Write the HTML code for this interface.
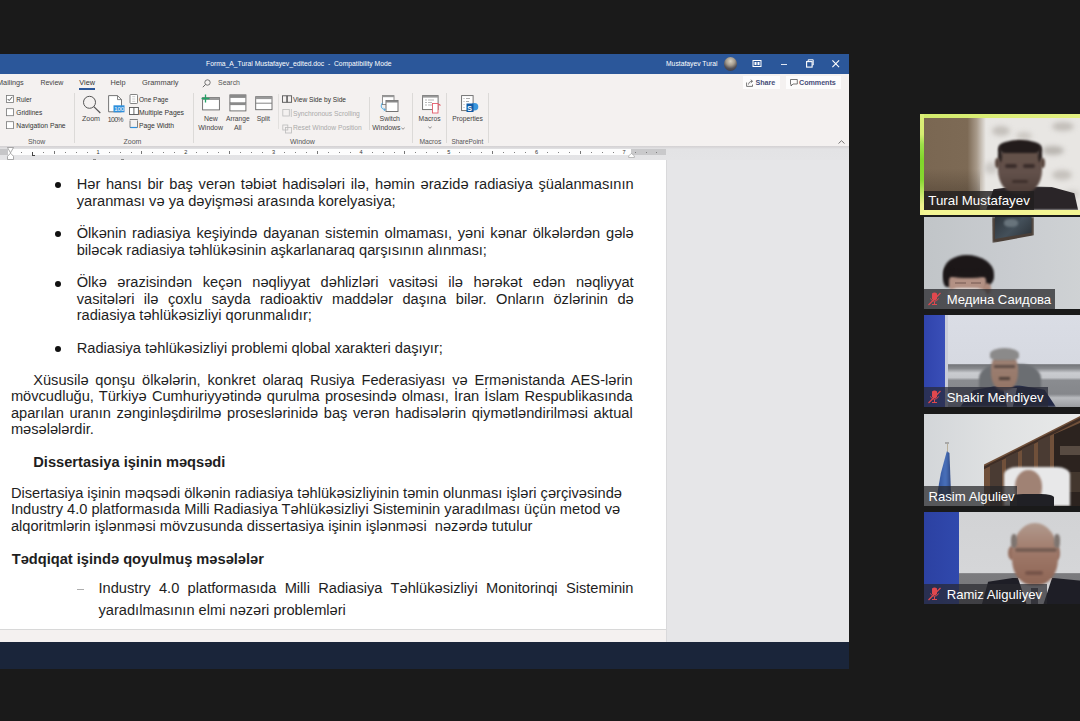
<!DOCTYPE html>
<html><head><meta charset="utf-8">
<style>
*{margin:0;padding:0;box-sizing:border-box}
html,body{width:1080px;height:721px;overflow:hidden;background:#1a1a1a;font-family:"Liberation Sans",sans-serif}
.a{position:absolute}
#win{position:absolute;left:0;top:54px;width:849px;height:615px;background:#e6e6e8;overflow:hidden}
#title{position:absolute;left:0;top:0;width:849px;height:20px;background:#2b579a;color:#fff}
#ribbon{position:absolute;left:0;top:20px;width:849px;height:72px;background:#f4f1f0}
#ruler{position:absolute;left:0;top:93px;width:849px;height:13px;background:#e1e1e3}
#page{position:absolute;left:0;top:106px;width:666px;height:470px;background:#fff;border-bottom:1px solid #d8d8d8}
#status{position:absolute;left:0;top:576px;width:666px;height:12px;background:#f4f1f0}
#navy{position:absolute;left:0;top:588px;width:849px;height:27px;background:#1a253a}
.doc{position:absolute;font-size:14.65px;line-height:16px;color:#1e1e1e;white-space:nowrap}
.j{text-align:justify;text-align-last:justify;white-space:normal}
.b{font-weight:bold}
.bul{position:absolute;width:6px;height:6px;border-radius:50%;background:#111}
.rt{position:absolute;font-size:7px;color:#333;white-space:nowrap;line-height:9px}
.tile{position:absolute;left:924px;width:160px;height:92px;overflow:hidden;background:#ccc}
.lbl{position:absolute;left:0;bottom:0;height:20px;background:rgba(30,30,30,.72)}
.nm{position:absolute;top:3px;font-size:13.1px;color:#fff;white-space:nowrap;line-height:15px}
</style></head><body>
<div id="win">
  <div id="title"></div>
  <div id="ribbon"></div>
  <div id="ruler"></div>
  <div id="page"></div>
  <div id="status"></div>
  <div class="a" style="left:666px;top:106px;width:1px;height:482px;background:#d9d9db"></div>
  <div id="navy"></div>
</div>
<!--RIB-->
<div class="a" style="left:0;top:54px;width:849px;height:20px;z-index:2">
 <div class="rt" style="left:206px;top:5px;color:#fff;font-size:6.78px;letter-spacing:0">Forma_A_Tural Mustafayev_edited.doc&nbsp; -&nbsp; Compatibility Mode</div>
 <div class="rt" style="left:666px;top:5.3px;color:#fff;font-size:6.75px">Mustafayev Tural</div>
 <div class="a" style="left:723.7px;top:3.3px;width:13.4px;height:13.4px;border-radius:50%;background:radial-gradient(circle at 50% 30%,#d8d2c4 0,#a59c8e 35%,#55535a 62%,#2c2e38 100%)"></div>
 <svg class="a" style="left:752px;top:5px" width="10" height="9" viewBox="0 0 10 9"><rect x="1" y="1.5" width="8" height="6" fill="none" stroke="#fff" stroke-width="1"/><rect x="2.5" y="3" width="2" height="3" fill="#fff"/><rect x="5.5" y="3" width="2" height="3" fill="#fff"/></svg>
 <div class="a" style="left:780.5px;top:9.5px;width:6.5px;height:1px;background:#dfe6f2"></div>
 <svg class="a" style="left:806px;top:5px" width="8" height="9" viewBox="0 0 8 9"><rect x="0.6" y="2.6" width="5.5" height="5.5" fill="none" stroke="#fff" stroke-width="1.1"/><path d="M2.2 2.3V0.8h5v5.2H6.3" fill="none" stroke="#fff" stroke-width="1"/></svg>
 <svg class="a" style="left:832px;top:6.3px" width="7.5" height="7.5" viewBox="0 0 7.5 7.5"><path d="M0.4 0.4L7.1 7.1M7.1 0.4L0.4 7.1" stroke="#fff" stroke-width="1.1"/></svg>
</div>
<div class="a" style="left:0;top:74px;width:849px;height:73px;z-index:2">
 <div class="rt" style="left:-3px;top:4.2px;font-size:7.3px;color:#444">Mailings</div>
 <div class="rt" style="left:40.4px;top:4.2px;font-size:7px;color:#444">Review</div>
 <div class="rt" style="left:79.3px;top:4.2px;font-size:7.3px;color:#333">View</div>
 <div class="a" style="left:78.7px;top:14px;width:16.7px;height:2px;background:#2b579a"></div>
 <div class="rt" style="left:110.5px;top:4.2px;font-size:7.3px;color:#444">Help</div>
 <div class="rt" style="left:142px;top:4.2px;font-size:7.4px;color:#444">Grammarly</div>
 <svg class="a" style="left:201.5px;top:4.5px" width="9" height="9" viewBox="0 0 9 9"><circle cx="5.5" cy="3.5" r="2.7" fill="none" stroke="#666" stroke-width="0.9"/><path d="M3.6 5.4L0.8 8.2" stroke="#666" stroke-width="1"/></svg>
 <div class="rt" style="left:218px;top:4.2px;font-size:6.95px;color:#555">Search</div>

 <!-- Show group -->
 <svg class="a" style="left:6px;top:21.4px" width="8" height="34" viewBox="0 0 8 34">
  <rect x="0.5" y="0.5" width="7" height="7" fill="#fff" stroke="#777" stroke-width="0.8"/><path d="M1.7 4L3.2 5.6L6.3 1.8" fill="none" stroke="#444" stroke-width="0.9"/>
  <rect x="0.5" y="13.7" width="7" height="7" fill="#fff" stroke="#777" stroke-width="0.8"/>
  <rect x="0.5" y="26.7" width="7" height="7" fill="#fff" stroke="#777" stroke-width="0.8"/>
 </svg>
 <div class="rt" style="left:16.3px;top:20.6px;font-size:6.4px;color:#333">Ruler</div>
 <div class="rt" style="left:16.3px;top:33.8px;font-size:6.6px;color:#333">Gridlines</div>
 <div class="rt" style="left:16.3px;top:46.8px;font-size:6.73px;color:#333">Navigation Pane</div>
 <div class="rt" style="left:28px;top:63.3px;font-size:6.9px;color:#555">Show</div>
 <div class="a" style="left:74px;top:19px;width:1px;height:50px;background:#dcdad8"></div>

 <!-- Zoom group -->
 <svg class="a" style="left:81.5px;top:20.5px" width="20" height="19" viewBox="0 0 20 19"><circle cx="7.5" cy="7.3" r="6" fill="none" stroke="#555" stroke-width="1"/><path d="M11.8 11.6L18.3 18" stroke="#555" stroke-width="1.2"/></svg>
 <svg class="a" style="left:107.5px;top:20.5px" width="17" height="18" viewBox="0 0 17 18"><path d="M0.6 0.6H9.5L13.5 4.6V16.8H0.6Z" fill="#fff" stroke="#666" stroke-width="0.9"/><path d="M9.5 0.6V4.6H13.5" fill="none" stroke="#666" stroke-width="0.8"/><rect x="5.5" y="10.3" width="11" height="7" fill="#2f8fdc"/><text x="6.2" y="16.3" font-size="6" fill="#fff" font-family="Liberation Sans">100</text></svg>
 <div class="rt" style="left:81.9px;top:41px;font-size:7.1px;color:#444">Zoom</div>
 <div class="rt" style="left:107.8px;top:40.6px;font-size:7px;letter-spacing:-0.72px;color:#444">100%</div>
 <svg class="a" style="left:128.5px;top:20.3px" width="10" height="36" viewBox="0 0 10 36">
  <rect x="1" y="0.5" width="7.5" height="9" rx="0.8" fill="#fff" stroke="#666" stroke-width="0.8"/><path d="M3.2 2.7H6.3M3.2 5H6.3M3.2 7.3H6.3" stroke="#999" stroke-width="0.5"/>
  <rect x="0.4" y="13.5" width="9" height="7" fill="#fff" stroke="#555" stroke-width="0.9"/><path d="M4.9 13.5V20.5" stroke="#555" stroke-width="0.9"/>
  <path d="M1 27V33.5H8.5V27" fill="none" stroke="#666" stroke-width="0.8"/><path d="M1 26.5V25.5H8.5V26.5" fill="none" stroke="#666" stroke-width="0.8"/><path d="M1.5 33.5H8" stroke="#2f8fdc" stroke-width="1.2"/>
 </svg>
 <div class="rt" style="left:139px;top:20.6px;font-size:6.5px;color:#333">One Page</div>
 <div class="rt" style="left:139px;top:33.8px;font-size:6.86px;color:#333">Multiple Pages</div>
 <div class="rt" style="left:139px;top:46.6px;font-size:6.77px;color:#333">Page Width</div>
 <div class="rt" style="left:123.5px;top:63.3px;font-size:7px;color:#555">Zoom</div>
 <div class="a" style="left:192.5px;top:19px;width:1px;height:50px;background:#dcdad8"></div>

 <!-- Window group -->
 <svg class="a" style="left:200.5px;top:20px" width="20" height="17" viewBox="0 0 20 17"><rect x="1.6" y="3.6" width="16.8" height="12.3" fill="#fff" stroke="#666" stroke-width="0.9"/><rect x="1.6" y="3.6" width="16.8" height="2.4" fill="#9a9a9a"/><path d="M4.5 0.5V8.5M0.5 4.5H8.5" stroke="#21a366" stroke-width="1.3"/></svg>
 <svg class="a" style="left:229px;top:20px" width="18" height="18" viewBox="0 0 18 18"><rect x="0.9" y="0.9" width="16" height="16" fill="#fff" stroke="#666" stroke-width="0.9"/><rect x="0.9" y="0.9" width="16" height="3" fill="#8a8a8a"/><path d="M0.9 8.9H16.9" stroke="#666" stroke-width="0.9"/><rect x="0.9" y="8.9" width="16" height="2.2" fill="#8a8a8a"/></svg>
 <svg class="a" style="left:254.5px;top:21.5px" width="18" height="15" viewBox="0 0 18 15"><rect x="0.7" y="0.7" width="16.3" height="13" fill="#fff" stroke="#666" stroke-width="0.9"/><rect x="0.7" y="0.7" width="16.3" height="2.4" fill="#9a9a9a"/><path d="M0.7 7.2H17" stroke="#777" stroke-width="0.9"/></svg>
 <div class="rt" style="left:204px;top:40.2px;font-size:6.9px;color:#444">New</div>
 <div class="rt" style="left:198.3px;top:49.3px;font-size:6.95px;color:#444">Window</div>
 <div class="rt" style="left:226px;top:40.2px;font-size:6.63px;color:#444">Arrange</div>
 <div class="rt" style="left:233.9px;top:49.3px;font-size:7px;color:#444">All</div>
 <div class="rt" style="left:256.7px;top:40.2px;font-size:6.84px;color:#444">Split</div>
 <div class="a" style="left:277.5px;top:20px;width:1px;height:35px;background:#e2e0de"></div>
 <svg class="a" style="left:281.5px;top:21px" width="11" height="41" viewBox="0 0 11 41">
  <rect x="0.5" y="0.8" width="4.3" height="6.5" fill="none" stroke="#555" stroke-width="0.9"/><rect x="5.3" y="0.8" width="4.3" height="6.5" fill="none" stroke="#555" stroke-width="0.9"/>
  <rect x="0.8" y="14.5" width="6.5" height="6.5" fill="none" stroke="#bbb" stroke-width="0.8"/><path d="M9.3 14V22" stroke="#bbb" stroke-width="0.8"/>
  <rect x="0.8" y="30" width="5" height="5" fill="none" stroke="#bbb" stroke-width="0.8"/><rect x="3.5" y="32.5" width="6" height="5.5" fill="none" stroke="#bbb" stroke-width="0.8"/>
 </svg>
 <div class="rt" style="left:293px;top:21.2px;font-size:6.6px;color:#333">View Side by Side</div>
 <div class="rt" style="left:293px;top:35.1px;font-size:6.73px;color:#aaa">Synchronous Scrolling</div>
 <div class="rt" style="left:293px;top:48.6px;font-size:6.7px;color:#aaa">Reset Window Position</div>
 <div class="rt" style="left:290px;top:63.3px;font-size:7px;color:#555">Window</div>
 <div class="a" style="left:368.5px;top:22.5px;width:1px;height:33px;background:#dcdad8"></div>
 <svg class="a" style="left:379.5px;top:20.5px" width="19" height="18" viewBox="0 0 19 18"><rect x="2.5" y="0.6" width="11.5" height="9" fill="#fff" stroke="#777" stroke-width="0.8"/><rect x="2.5" y="0.6" width="11.5" height="1.6" fill="#999"/><rect x="6" y="5.5" width="12" height="11" fill="#fff" stroke="#666" stroke-width="0.9"/><rect x="6" y="5.5" width="12" height="2" fill="#888"/><path d="M2.6 7.8C0.4 10 0.8 14.2 4.8 14.6" fill="none" stroke="#35a0e0" stroke-width="0.9"/><path d="M3.6 13.2L5.3 14.6L3.8 16.1" fill="none" stroke="#35a0e0" stroke-width="0.8"/></svg>
 <div class="rt" style="left:379.5px;top:40.2px;font-size:6.96px;color:#444">Switch</div>
 <div class="rt" style="left:372.3px;top:49.3px;font-size:6.96px;color:#444">Windows</div><svg class="a" style="left:401px;top:52.5px" width="4" height="3" viewBox="0 0 4 3"><path d="M0.3 0.5L2 2.3L3.7 0.5" fill="none" stroke="#666" stroke-width="0.7"/></svg>
 <div class="a" style="left:411.7px;top:19px;width:1px;height:50px;background:#dcdad8"></div>

 <!-- Macros -->
 <svg class="a" style="left:421.5px;top:20.5px" width="19" height="19" viewBox="0 0 19 19"><rect x="0.6" y="0.6" width="15.5" height="14" fill="#fff" stroke="#666" stroke-width="0.9"/><rect x="0.6" y="0.6" width="15.5" height="2" fill="#999"/><path d="M3 5H5M6 5H12M3 7.5H5M6 7.5H10M3 10H5M6 10H10" stroke="#999" stroke-width="0.7"/><rect x="10.5" y="8.5" width="5.5" height="9.5" fill="#fff" stroke="#e45c6a" stroke-width="0.9"/><path d="M16 9.5H18V11" fill="none" stroke="#e45c6a" stroke-width="0.9"/></svg>
 <div class="rt" style="left:418.6px;top:40.2px;font-size:6.7px;color:#444">Macros</div>
 <svg class="a" style="left:428px;top:51.5px" width="4" height="3" viewBox="0 0 4 3"><path d="M0.3 0.5L2 2.3L3.7 0.5" fill="none" stroke="#666" stroke-width="0.7"/></svg>
 <div class="rt" style="left:419.4px;top:63.4px;font-size:6.7px;color:#555">Macros</div>
 <div class="a" style="left:446px;top:19px;width:1px;height:50px;background:#dcdad8"></div>

 <!-- SharePoint -->
 <svg class="a" style="left:461px;top:20.5px" width="18" height="19" viewBox="0 0 18 19"><rect x="0.6" y="0.6" width="11.5" height="15" fill="#fff" stroke="#666" stroke-width="0.9"/><path d="M2.5 3.5H3.5M5 3.5H9M2.5 6.5H3.5M5 6.5H8M2.5 9.5H3.5M2.5 12.5H3.5" stroke="#888" stroke-width="0.7"/><circle cx="13.5" cy="11.8" r="3.8" fill="#3a96dd"/><rect x="5.5" y="8.5" width="7" height="8.5" fill="#0f5aa6"/><text x="6.3" y="15.5" font-size="7" font-weight="bold" fill="#fff" font-family="Liberation Sans">S</text></svg>
 <div class="rt" style="left:452.3px;top:40.2px;font-size:6.73px;color:#444">Properties</div>
 <div class="rt" style="left:451.4px;top:63.4px;font-size:6.43px;color:#555">SharePoint</div>
 <div class="a" style="left:488.2px;top:19px;width:1px;height:50px;background:#dcdad8"></div>

 <!-- Share / Comments -->
 <div class="a" style="left:742.6px;top:2px;width:37px;height:12.5px;background:#fdfcfc"></div>
 <svg class="a" style="left:745.5px;top:4.5px" width="8" height="8" viewBox="0 0 8 8"><path d="M0.6 3.5V7.4H6.5V5.5" fill="none" stroke="#555" stroke-width="0.8"/><path d="M2.5 5.5C2.7 3.5 4 2.3 6 2.3M4.8 0.8L6.6 2.3L4.8 3.8" fill="none" stroke="#555" stroke-width="0.8"/></svg>
 <div class="rt" style="left:755.6px;top:3.9px;font-size:7.2px;color:#474d78;font-weight:bold;letter-spacing:-0.1px">Share</div>
 <div class="a" style="left:786px;top:2px;width:55px;height:12.5px;background:#fdfcfc"></div>
 <svg class="a" style="left:789.5px;top:4.5px" width="8" height="8" viewBox="0 0 8 8"><path d="M0.5 0.5H7.3V5H3L1 7V5H0.5Z" fill="none" stroke="#555" stroke-width="0.8"/></svg>
 <div class="rt" style="left:799px;top:3.9px;font-size:7.2px;color:#474d78;font-weight:bold;letter-spacing:-0.05px">Comments</div>
 <svg class="a" style="left:837.5px;top:66px" width="7" height="4" viewBox="0 0 7 4"><path d="M0.5 3.5L3.5 0.7L6.5 3.5" fill="none" stroke="#666" stroke-width="0.9"/></svg>
</div>
<!--/RIB-->

<!--RUL-->
<div class="a" style="left:0;top:146px;width:849px;height:14px;z-index:2;background:linear-gradient(180deg,#d3d1d3 0,#dcdbdd 2px,#e3e3e5 3px,#e4e4e6 100%)">
<div class="a" style="left:0;top:3px;width:8px;height:6px;background:#c6c6c8"></div>
<div class="a" style="left:8px;top:3px;width:623px;height:6px;background:#fdfdfd"></div>
<div class="a" style="left:631px;top:3px;width:35px;height:6px;background:#c9c9cb"></div>
<div class="a" style="left:20.96px;top:5.5px;width:1px;height:1px;background:#808080"></div>
<div class="a" style="left:42.87px;top:5.5px;width:1px;height:1px;background:#808080"></div>
<div class="a" style="left:53.83px;top:4.5px;width:1px;height:3px;background:#777"></div>
<div class="a" style="left:64.79px;top:5.5px;width:1px;height:1px;background:#808080"></div>
<div class="a" style="left:75.75px;top:5.5px;width:1px;height:1px;background:#808080"></div>
<div class="a" style="left:86.70px;top:5.5px;width:1px;height:1px;background:#808080"></div>
<div class="a" style="left:96.16px;top:3.3px;width:4px;text-align:center;font-size:5.6px;line-height:6px;color:#333">1</div>
<div class="a" style="left:108.62px;top:5.5px;width:1px;height:1px;background:#808080"></div>
<div class="a" style="left:119.57px;top:5.5px;width:1px;height:1px;background:#808080"></div>
<div class="a" style="left:130.53px;top:5.5px;width:1px;height:1px;background:#808080"></div>
<div class="a" style="left:141.49px;top:4.5px;width:1px;height:3px;background:#777"></div>
<div class="a" style="left:152.45px;top:5.5px;width:1px;height:1px;background:#808080"></div>
<div class="a" style="left:163.41px;top:5.5px;width:1px;height:1px;background:#808080"></div>
<div class="a" style="left:174.36px;top:5.5px;width:1px;height:1px;background:#808080"></div>
<div class="a" style="left:183.82px;top:3.3px;width:4px;text-align:center;font-size:5.6px;line-height:6px;color:#333">2</div>
<div class="a" style="left:196.28px;top:5.5px;width:1px;height:1px;background:#808080"></div>
<div class="a" style="left:207.23px;top:5.5px;width:1px;height:1px;background:#808080"></div>
<div class="a" style="left:218.19px;top:5.5px;width:1px;height:1px;background:#808080"></div>
<div class="a" style="left:229.15px;top:4.5px;width:1px;height:3px;background:#777"></div>
<div class="a" style="left:240.11px;top:5.5px;width:1px;height:1px;background:#808080"></div>
<div class="a" style="left:251.06px;top:5.5px;width:1px;height:1px;background:#808080"></div>
<div class="a" style="left:262.02px;top:5.5px;width:1px;height:1px;background:#808080"></div>
<div class="a" style="left:271.48px;top:3.3px;width:4px;text-align:center;font-size:5.6px;line-height:6px;color:#333">3</div>
<div class="a" style="left:283.94px;top:5.5px;width:1px;height:1px;background:#808080"></div>
<div class="a" style="left:294.89px;top:5.5px;width:1px;height:1px;background:#808080"></div>
<div class="a" style="left:305.85px;top:5.5px;width:1px;height:1px;background:#808080"></div>
<div class="a" style="left:316.81px;top:4.5px;width:1px;height:3px;background:#777"></div>
<div class="a" style="left:327.77px;top:5.5px;width:1px;height:1px;background:#808080"></div>
<div class="a" style="left:338.72px;top:5.5px;width:1px;height:1px;background:#808080"></div>
<div class="a" style="left:349.68px;top:5.5px;width:1px;height:1px;background:#808080"></div>
<div class="a" style="left:359.14px;top:3.3px;width:4px;text-align:center;font-size:5.6px;line-height:6px;color:#333">4</div>
<div class="a" style="left:371.60px;top:5.5px;width:1px;height:1px;background:#808080"></div>
<div class="a" style="left:382.56px;top:5.5px;width:1px;height:1px;background:#808080"></div>
<div class="a" style="left:393.51px;top:5.5px;width:1px;height:1px;background:#808080"></div>
<div class="a" style="left:404.47px;top:4.5px;width:1px;height:3px;background:#777"></div>
<div class="a" style="left:415.43px;top:5.5px;width:1px;height:1px;background:#808080"></div>
<div class="a" style="left:426.38px;top:5.5px;width:1px;height:1px;background:#808080"></div>
<div class="a" style="left:437.34px;top:5.5px;width:1px;height:1px;background:#808080"></div>
<div class="a" style="left:446.80px;top:3.3px;width:4px;text-align:center;font-size:5.6px;line-height:6px;color:#333">5</div>
<div class="a" style="left:459.26px;top:5.5px;width:1px;height:1px;background:#808080"></div>
<div class="a" style="left:470.21px;top:5.5px;width:1px;height:1px;background:#808080"></div>
<div class="a" style="left:481.17px;top:5.5px;width:1px;height:1px;background:#808080"></div>
<div class="a" style="left:492.13px;top:4.5px;width:1px;height:3px;background:#777"></div>
<div class="a" style="left:503.09px;top:5.5px;width:1px;height:1px;background:#808080"></div>
<div class="a" style="left:514.04px;top:5.5px;width:1px;height:1px;background:#808080"></div>
<div class="a" style="left:525.00px;top:5.5px;width:1px;height:1px;background:#808080"></div>
<div class="a" style="left:534.46px;top:3.3px;width:4px;text-align:center;font-size:5.6px;line-height:6px;color:#333">6</div>
<div class="a" style="left:546.92px;top:5.5px;width:1px;height:1px;background:#808080"></div>
<div class="a" style="left:557.88px;top:5.5px;width:1px;height:1px;background:#808080"></div>
<div class="a" style="left:568.83px;top:5.5px;width:1px;height:1px;background:#808080"></div>
<div class="a" style="left:579.79px;top:4.5px;width:1px;height:3px;background:#777"></div>
<div class="a" style="left:590.75px;top:5.5px;width:1px;height:1px;background:#808080"></div>
<div class="a" style="left:601.70px;top:5.5px;width:1px;height:1px;background:#808080"></div>
<div class="a" style="left:612.66px;top:5.5px;width:1px;height:1px;background:#808080"></div>
<div class="a" style="left:622.12px;top:3.3px;width:4px;text-align:center;font-size:5.6px;line-height:6px;color:#333">7</div>
<div class="a" style="left:634.58px;top:5.5px;width:1px;height:1px;background:#808080"></div>
<div class="a" style="left:645.53px;top:5.5px;width:1px;height:1px;background:#808080"></div>
<div class="a" style="left:656.49px;top:5.5px;width:1px;height:1px;background:#808080"></div>
<div class="a" style="left:32px;top:6px;width:3.2px;height:4px;border-left:1px solid #444;border-bottom:1px solid #444"></div>
<svg class="a" style="left:7px;top:1px" width="7" height="13" viewBox="0 0 7 13"><path d="M0.5 0.5H6.5L3.5 5.8Z" fill="#fff" stroke="#888" stroke-width="0.7"/><path d="M3.5 6.2L0.5 9.3V12.5H6.5V9.3Z" fill="#fff" stroke="#888" stroke-width="0.7"/></svg>
<svg class="a" style="left:628px;top:7px" width="7" height="5" viewBox="0 0 7 5"><path d="M3.5 0.5L6.3 2.8V4.5H0.7V2.8Z" fill="#fff" stroke="#999" stroke-width="0.6"/></svg>
<div class="a" style="left:93px;top:13px;width:3px;height:1px;background:#888"></div>
<div class="a" style="left:120.5px;top:13px;width:3px;height:1px;background:#888"></div>
</div>
<!--/RUL-->
<!--DOC-->
<div class="doc j" style="left:76.70px;top:176.26px;width:557px">Hər hansı bir baş verən təbiət hadisələri ilə, həmin ərazidə radiasiya şüalanmasının</div>
<div class="doc " style="left:76.70px;top:192.56px">yaranması və ya dəyişməsi arasında korelyasiya;</div>
<div class="doc j" style="left:76.70px;top:225.26px;width:557px">Ölkənin radiasiya keşiyində dayanan sistemin olmaması, yəni kənar ölkələrdən gələ</div>
<div class="doc " style="left:76.70px;top:241.56px">biləcək radiasiya təhlükəsinin aşkarlanaraq qarşısının alınması;</div>
<div class="doc j" style="left:76.70px;top:274.16px;width:557px">Ölkə ərazisindən keçən nəqliyyat dəhlizləri vasitəsi ilə hərəkət edən nəqliyyat</div>
<div class="doc j" style="left:76.70px;top:290.56px;width:557px">vasitələri ilə çoxlu sayda radioaktiv maddələr daşına bilər. Onların özlərinin də</div>
<div class="doc " style="left:76.70px;top:306.96px">radiasiya təhlükəsizliyi qorunmalıdır;</div>
<div class="doc " style="left:76.70px;top:339.56px">Radiasiya təhlükəsizliyi problemi qlobal xarakteri daşıyır;</div>
<div class="doc j" style="left:33.20px;top:371.96px;width:599.5px">Xüsusilə qonşu ölkələrin, konkret olaraq Rusiya Federasiyası və Ermənistanda AES-lərin</div>
<div class="doc j" style="left:10.90px;top:388.26px;width:621.8px">mövcudluğu, Türkiyə Cumhuriyyətində qurulma prosesində olması, İran İslam Respublikasında</div>
<div class="doc j" style="left:10.90px;top:404.66px;width:621.8px">aparılan uranın zənginləşdirilmə proseslərinidə baş verən hadisələrin qiymətləndirilməsi aktual</div>
<div class="doc " style="left:10.90px;top:420.96px">məsələlərdir.</div>
<div class="doc b" style="left:33.30px;top:454.26px">Dissertasiya işinin məqsədi</div>
<div class="doc " style="left:10.90px;top:484.86px">Disertasiya işinin məqsədi ölkənin radiasiya təhlükəsizliyinin təmin olunması işləri çərçivəsində</div>
<div class="doc " style="left:10.90px;top:501.16px">Industry 4.0 platformasıda Milli Radiasiya Təhlükəsizliyi Sisteminin yaradılması üçün metod və</div>
<div class="doc " style="left:10.90px;top:518.36px">alqoritmlərin işlənməsi mövzusunda dissertasiya işinin işlənməsi&nbsp; nəzərdə tutulur</div>
<div class="doc b" style="left:11.70px;top:550.56px">Tədqiqat işində qoyulmuş məsələlər</div>
<div class="doc j" style="left:98.50px;top:580.26px;width:535px">Industry 4.0 platformasıda Milli Radiasiya Təhlükəsizliyi Monitorinqi Sisteminin</div>
<div class="doc " style="left:98.50px;top:602.06px">yaradılmasının elmi nəzəri problemləri</div>
<div class="bul" style="left:55px;top:182.00px"></div>
<div class="bul" style="left:55px;top:231.00px"></div>
<div class="bul" style="left:55px;top:280.6px"></div>
<div class="bul" style="left:55px;top:345.8px"></div>
<div class="a" style="left:76.8px;top:588.8px;width:7.2px;height:1.4px;background:#aeaeae"></div>
<!--/DOC-->
<!--TILES-->
<div class="a" style="left:920px;top:114px;width:164px;height:101px;background:linear-gradient(180deg,#dcee78 0,#d6ec72 20%,#9ddf4a 30%,#80d52a 45%,#86d730 65%,#c8ea6e 80%,#eef28c 90%,#f2f490 100%)"></div>
<div class="a" style="left:924px;top:114px;width:160px;height:4px;background:linear-gradient(90deg,#d2eb6c,#dcee78 50%,#e4f082)"></div>
<div class="a" style="left:924px;top:210px;width:160px;height:5px;background:#f3f493"></div>
<div class="tile" style="top:118px;background:#e8e6e3">
  <div class="a" style="left:0;top:0;width:62px;height:92px;background:linear-gradient(90deg,#7a6752 0,#7d6a55 70%,#a89a8a 85%,rgba(232,230,227,0) 100%)"></div>
  <div class="a" style="left:0;top:0;width:56px;height:92px;background:linear-gradient(180deg,rgba(0,0,0,0) 0,rgba(0,0,0,0) 55%,rgba(30,22,15,.25) 80%,rgba(30,22,15,.45) 100%)"></div>
  <div class="a" style="left:68px;top:8px;width:18px;height:10px;border-radius:50%;background:#c4c0bb;filter:blur(2.5px)"></div>
  <div class="a" style="left:92px;top:14px;width:16px;height:8px;border-radius:50%;background:#cbc7c2;filter:blur(2.5px)"></div>
  <div class="a" style="left:118px;top:28px;width:22px;height:9px;border-radius:50%;background:#b9b5b0;filter:blur(2.5px)"></div>
  <div class="a" style="left:128px;top:4px;width:22px;height:9px;border-radius:50%;background:#c2beb9;filter:blur(2.5px)"></div>
  <div class="a" style="left:60px;top:44px;width:14px;height:12px;border-radius:50%;background:#cdcac6;filter:blur(2.5px)"></div>
  <div class="a" style="left:128px;top:52px;width:20px;height:10px;border-radius:50%;background:#c5c1bc;filter:blur(2.5px)"></div>
  <div class="a" style="left:140px;top:72px;width:16px;height:8px;border-radius:50%;background:#cfccc8;filter:blur(2.5px)"></div>
  <div class="a" style="left:62px;top:68px;width:94px;height:24px;background:#2a2528;clip-path:polygon(8% 14%,36% 0,70% 4%,94% 30%,98% 100%,0 100%);filter:blur(1px)"></div>
  <div class="a" style="left:74px;top:23px;width:44px;height:53px;border-radius:46% 46% 44% 44%;background:linear-gradient(180deg,#655249 0,#62504a 60%,#4e3e38 100%);filter:blur(1px)"></div>
  <div class="a" style="left:75px;top:22px;width:42px;height:13px;border-radius:50% 50% 22% 22%;background:#221b1b;filter:blur(1px)"></div>
  <div class="a" style="left:74px;top:28px;width:4px;height:16px;border-radius:40%;background:#2a2120;filter:blur(1px)"></div>
  <div class="a" style="left:114px;top:28px;width:4px;height:16px;border-radius:40%;background:#2a2120;filter:blur(1px)"></div>
  <div class="a" style="left:81px;top:46px;width:12px;height:4px;background:#3a2d2a;border-radius:2px;filter:blur(1px)"></div>
  <div class="a" style="left:99px;top:46px;width:12px;height:4px;background:#3a2d2a;border-radius:2px;filter:blur(1px)"></div>
  <div class="a" style="left:88px;top:62px;width:16px;height:3px;background:#3f302c;border-radius:2px;filter:blur(1px)"></div><div class="a" style="left:71px;top:40px;width:5px;height:10px;border-radius:50%;background:#5a4840;filter:blur(1px)"></div><div class="a" style="left:116px;top:40px;width:5px;height:10px;border-radius:50%;background:#5a4840;filter:blur(1px)"></div>
  <div class="lbl" style="width:110px;height:19.5px;background:rgba(32,30,30,.8)"><div class="nm" style="left:4.3px;top:2.5px;font-size:13.3px">Tural Mustafayev</div></div>
</div>

<div class="tile" style="top:217px;background:linear-gradient(90deg,#c1c5c8,#c9ccd0 55%,#cfd2d4)">
  <div class="a" style="left:68px;top:0;width:42px;height:26px;background:#4a3f38;clip-path:polygon(0 0,100% 0,100% 70%,1% 100%);filter:blur(1px)"></div>
  <div class="a" style="left:70.5px;top:0;width:37px;height:22px;background:linear-gradient(135deg,#2e353c,#44505a 50%,#2a3036);clip-path:polygon(0 0,100% 0,100% 72%,0 100%)"></div>
  <div class="a" style="left:80px;top:2px;width:14px;height:8px;background:#68747c;border-radius:40%;filter:blur(1.2px)"></div>
  <div class="a" style="left:20px;top:38px;width:50px;height:34px;border-radius:45% 55% 35% 40%;background:#1c1718;filter:blur(1px)"></div>
  <div class="a" style="left:19px;top:50px;width:10px;height:20px;border-radius:40%;background:#1c1718;filter:blur(1px)"></div>
  <div class="a" style="left:25px;top:57px;width:37px;height:20px;border-radius:30% 30% 40% 40%;background:#b39184;filter:blur(1px)"></div>
  <div class="a" style="left:25px;top:53px;width:38px;height:8px;border-radius:40%;background:#1c1718;filter:blur(1px)"></div>
  <div class="a" style="left:59px;top:66px;width:8px;height:11px;border-radius:50%;background:#ae8a7c;filter:blur(1px)"></div>
  <div class="a" style="left:31px;top:65px;width:11px;height:2px;background:#5a4038;opacity:.35"></div>
  <div class="a" style="left:47px;top:65px;width:10px;height:2px;background:#5a4038;opacity:.35"></div>
  <div class="a" style="left:24px;top:71px;width:38px;height:14px;background:#e6e4e2;border-radius:35% 35% 20% 20%;filter:blur(1px)"></div>
  <div class="lbl" style="width:131px;height:20px;background:rgba(38,38,42,.74)">
    <svg class="a" style="left:3px;top:3px" width="15" height="14" viewBox="0 0 15 14"><path d="M5 1.5Q7.5 -0.5 10 1.5V7Q7.5 9.5 5 7Z" fill="#e0484e"/><path d="M3.2 6.5Q7.5 12 11.8 6.5M7.5 9.5V12.5M5 12.5H10" fill="none" stroke="#e0484e" stroke-width="1"/><path d="M1.5 13L13.5 1" stroke="#e0484e" stroke-width="1.3"/></svg>
    <div class="nm" style="left:22.7px;top:2.5px;font-size:13.1px">Медина Саидова</div></div>
</div>

<div class="tile" style="top:315px;background:linear-gradient(180deg,#dadde5 0,#d6d9e1 53%,#74767a 54%,#86888c 58%,#caccd0 63%,#c4c6ca 68%,#8a8c90 71%,#85878b 86%,#b9bbbf 90%,#9a9ca0 100%)">
  <div class="a" style="left:0;top:0;width:20.5px;height:92px;background:linear-gradient(90deg,#3044ac,#3a4fb8)"></div>
  <div class="a" style="left:20.5px;top:0;width:3px;height:92px;background:#c9ccd8"></div>
  <div class="a" style="left:55px;top:49px;width:62px;height:40px;border-radius:35% 35% 8% 8%;background:#6b6e72;filter:blur(1px)"></div>
  <div class="a" style="left:36px;top:70px;width:96px;height:22px;background:#222845;clip-path:polygon(14% 24%,40% 2%,62% 2%,88% 22%,100% 100%,0 100%);filter:blur(1px)"></div>
  <div class="a" style="left:79px;top:73px;width:14px;height:19px;background:#b8b8c0;clip-path:polygon(0 0,100% 0,70% 100%,30% 100%)"></div>
  <div class="a" style="left:67px;top:36px;width:27px;height:40px;border-radius:46% 46% 46% 46%;background:linear-gradient(180deg,#8a7a72,#9c7f71 30%,#957566 100%);filter:blur(1px)"></div>
  <div class="a" style="left:66px;top:33px;width:29px;height:12px;border-radius:50% 50% 25% 25%;background:#8b8a8a;filter:blur(1px)"></div>
  <div class="a" style="left:70px;top:50px;width:21px;height:3px;background:#4d3f3a;opacity:.75;filter:blur(1px)"></div>
  <div class="a" style="left:75px;top:62px;width:11px;height:3px;background:#3b302c;opacity:.75;filter:blur(1px)"></div>
  <div class="lbl" style="width:124px;height:20px;background:rgba(40,42,55,.72)">
    <svg class="a" style="left:3px;top:3px" width="15" height="14" viewBox="0 0 15 14"><path d="M5 1.5Q7.5 -0.5 10 1.5V7Q7.5 9.5 5 7Z" fill="#e0484e"/><path d="M3.2 6.5Q7.5 12 11.8 6.5M7.5 9.5V12.5M5 12.5H10" fill="none" stroke="#e0484e" stroke-width="1"/><path d="M1.5 13L13.5 1" stroke="#e0484e" stroke-width="1.3"/></svg>
    <div class="nm" style="left:22.7px;top:2.5px;font-size:13.1px">Shakir Mehdiyev</div></div>
</div>

<div class="tile" style="top:414px;background:linear-gradient(90deg,#d3d6d9,#dfe1e2 45%,#e9eaea)">
  <div class="a" style="left:22.5px;top:29px;width:1.5px;height:12px;background:#b8ae98"></div><div class="a" style="left:21px;top:28px;width:4px;height:2px;background:#a8a8a8"></div>
  <div class="a" style="left:12px;top:37px;width:16px;height:50px;background:linear-gradient(90deg,#2c4a92,#4a72bc 60%,#2a3f78);clip-path:polygon(68% 0,84% 4%,96% 100%,0 100%,30% 45%);filter:blur(1px)"></div>
  <div class="a" style="left:60px;top:0;width:100px;height:92px;background:#70503a;clip-path:polygon(0 55%,100% 0,100% 100%,0 100%)"></div>
  <div class="a" style="left:60px;top:0;width:100px;height:92px;background:#3e2d25;clip-path:polygon(0 57%,100% 2%,100% 5%,0 60%)"></div>
  <div class="a" style="left:66px;top:0;width:12px;height:92px;background:#4a3b33;clip-path:polygon(0 56%,100% 50%,100% 100%,0 100%)"></div>
  <div class="a" style="left:82px;top:0;width:12px;height:92px;background:#4a3b33;clip-path:polygon(0 47%,100% 41%,100% 100%,0 100%)"></div>
  <div class="a" style="left:98px;top:0;width:12px;height:92px;background:#4a3b33;clip-path:polygon(0 38%,100% 32%,100% 100%,0 100%)"></div>
  <div class="a" style="left:114px;top:0;width:12px;height:92px;background:#4a3b33;clip-path:polygon(0 29%,100% 23%,100% 100%,0 100%)"></div>
  <div class="a" style="left:130px;top:0;width:30px;height:92px;background:#2c231f;clip-path:polygon(0 22%,100% 8%,100% 100%,0 100%)"></div>
  <div class="a" style="left:136px;top:32px;width:20px;height:9px;background:#7d6e5e;opacity:.55"></div>
  <div class="a" style="left:140px;top:58px;width:18px;height:20px;background:#5a4c3e;opacity:.5"></div>
  <div class="a" style="left:80px;top:53px;width:66px;height:39px;border-radius:20% 20% 0 0;background:#e8e8e9;filter:blur(1px)"></div>
  <div class="a" style="left:91px;top:56px;width:27px;height:34px;border-radius:48%;background:#a08274;filter:blur(1px)"></div>
  <div class="a" style="left:86px;top:80px;width:44px;height:12px;background:#202025;border-radius:30% 30% 0 0"></div>
  <div class="lbl" style="width:93px;height:20px;background:rgba(38,38,40,.72)"><div class="nm" style="left:4.5px;top:2.5px;font-size:13.15px">Rasim Alguliev</div></div>
</div>

<div class="tile" style="top:512px;background:linear-gradient(180deg,#d2d3d5 0,#d5d6d8 66%,#7b7b7e 67%,#77777a 100%)">
  <div class="a" style="left:0;top:0;width:35.3px;height:92px;background:linear-gradient(90deg,#2c41a2,#3049ad)"></div>
  <div class="a" style="left:58px;top:66px;width:102px;height:26px;background:#1e1e26;clip-path:polygon(6% 14%,30% 0,70% 0,100% 12%,100% 100%,0 100%)"></div>
  <div class="a" style="left:94px;top:66px;width:34px;height:26px;background:#d2d2d5;clip-path:polygon(0 0,100% 0,75% 100%,25% 100%)"></div>
  <div class="a" style="left:107px;top:76px;width:7px;height:16px;background:#55555e"></div>
  <div class="a" style="left:84px;top:34px;width:8px;height:14px;border-radius:50%;background:#956f60;filter:blur(1px)"></div>
  <div class="a" style="left:130px;top:34px;width:6px;height:14px;border-radius:50%;background:#956f60;filter:blur(1px)"></div>
  <div class="a" style="left:88px;top:11px;width:46px;height:62px;border-radius:50% 50% 42% 42%;background:linear-gradient(180deg,#b19a8e 0,#a8887a 25%,#9c7565 55%,#8e6656 100%);filter:blur(1px)"></div>
  <div class="a" style="left:87px;top:22px;width:6px;height:14px;border-radius:40%;background:#7d746f;filter:blur(1px)"></div>
  <div class="a" style="left:130px;top:22px;width:6px;height:14px;border-radius:40%;background:#7d746f;filter:blur(1px)"></div>
  <div class="a" style="left:91px;top:36px;width:42px;height:4px;border-radius:2px;background:#6b554c;opacity:.8;filter:blur(1px)"></div>
  <div class="a" style="left:101px;top:59px;width:18px;height:4px;border-radius:2px;background:#6a4a42;opacity:.7;filter:blur(1px)"></div>
  <div class="lbl" style="width:123px;height:20px;background:rgba(40,40,45,.7)">
    <svg class="a" style="left:3px;top:3px" width="15" height="14" viewBox="0 0 15 14"><path d="M5 1.5Q7.5 -0.5 10 1.5V7Q7.5 9.5 5 7Z" fill="#e0484e"/><path d="M3.2 6.5Q7.5 12 11.8 6.5M7.5 9.5V12.5M5 12.5H10" fill="none" stroke="#e0484e" stroke-width="1"/><path d="M1.5 13L13.5 1" stroke="#e0484e" stroke-width="1.3"/></svg>
    <div class="nm" style="left:22.7px;top:2.5px;font-size:13.1px">Ramiz Aliguliyev</div></div>
</div>
<!--/TILES-->

</body></html>
